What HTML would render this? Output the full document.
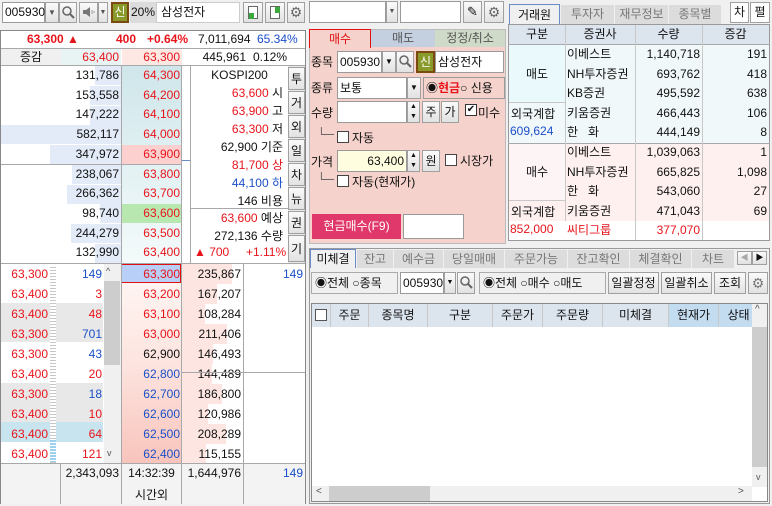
<!DOCTYPE html>
<html><head><meta charset="utf-8">
<style>
*{box-sizing:border-box;margin:0;padding:0}
body{width:772px;height:506px;overflow:hidden;background:#f0f0f0;font-family:"Liberation Sans","Noto Sans CJK KR",sans-serif;font-size:12px;color:#111;position:relative}
div{position:absolute;white-space:nowrap}
span{white-space:nowrap}
span[style*="left"]{position:absolute}
.r{color:#e8141b}.b{color:#1a4fc8}
.ra{text-align:right}.ca{text-align:center}
.bx{border:1px solid #9a9a9a;background:#fff}
.btn{border:1px solid #a0a0a0;background:linear-gradient(#fafafa,#e2e2e2);text-align:center}
.ln{background:#a8a8a8}
</style></head><body>

<!-- LEFT TOOLBAR -->
<div class="bx" style="left:2px;top:2px;width:43px;height:21px;line-height:19px;padding-left:2px">005930</div>
<div class="btn" style="left:45px;top:2px;width:14px;height:21px;line-height:19px;font-size:8px;color:#555">▼</div>
<div class="btn" style="left:59px;top:2px;width:18px;height:21px"><svg width="16" height="18"><circle cx="7" cy="8" r="4" fill="none" stroke="#666" stroke-width="1.5"/><path d="M10 11l4 4" stroke="#666" stroke-width="2"/></svg></div>
<div class="btn" style="left:79px;top:2px;width:19px;height:21px"><svg width="18" height="18"><path d="M3 7h3l4-3v10l-4-3H3z" fill="#777"/><path d="M12 7v4M14 8v2" stroke="#999"/></svg></div>
<div class="btn" style="left:98px;top:2px;width:10px;height:21px;font-size:7px;line-height:19px;color:#555">▼</div>
<div style="left:111px;top:2px;width:18px;height:21px;background:#8a9a2a;border:2px solid #7a4a10;color:#fff;text-align:center;line-height:17px">신</div>
<div style="left:130px;top:2px;width:26px;height:21px;background:#dcdcdc;line-height:21px;text-align:center">20%</div>
<div class="bx" style="left:156px;top:2px;width:84px;height:21px;line-height:19px;padding-left:4px;border-color:#ccc">삼성전자</div>
<div class="btn" style="left:243px;top:2px;width:20px;height:21px"><div style="left:4px;top:3px;width:10px;height:13px;border:1px solid #666;background:#fff"></div><div style="left:5px;top:10px;width:5px;height:6px;background:#3aa83a"></div></div>
<div class="btn" style="left:265px;top:2px;width:20px;height:21px"><div style="left:4px;top:3px;width:10px;height:13px;border:1px solid #666;background:#fff"></div><div style="left:9px;top:4px;width:5px;height:6px;background:#3aa83a"></div></div>
<div class="btn" style="left:287px;top:2px;width:18px;height:21px;font-size:14px;line-height:19px;color:#666">⚙</div>

<!-- LEFT PANEL -->
<div style="left:0;top:30px;width:306px;height:474px;background:#fff;border:1px solid #888"></div>
<div style="left:1px;top:31px;width:304px;height:17px;line-height:17px;font-weight:bold">
 <span class="r" style="left:26px">63,300 ▲</span>
 <span class="r" style="left:115px">400</span>
 <span class="r" style="left:146px">+0.64%</span>
 <span style="left:197px;font-weight:normal">7,011,694</span>
 <span class="b" style="left:256px;font-weight:normal">65.34%</span>
</div>
<div class="ln" style="left:1px;top:48px;width:304px;height:1px"></div>
<div style="left:1px;top:49px;width:60px;height:16px;background:#f0f0f0;line-height:16px;text-align:center">증감</div>
<div class="r ra" style="left:61px;top:49px;width:60px;height:16px;background:#e8f4f4;line-height:16px;padding-right:2px">63,400</div>
<div class="r ra" style="left:122px;top:49px;width:60px;height:16px;background:#fde8e4;line-height:16px;padding-right:2px">63,300</div>
<div class="ra" style="left:182px;top:49px;width:66px;height:16px;line-height:16px;padding-right:2px">445,961</div>
<div style="left:253px;top:49px;width:50px;height:16px;line-height:16px">0.12%</div>
<div class="ln" style="left:1px;top:65px;width:304px;height:1px"></div>

<!-- upper sell rows -->
<div style="left:121px;top:66px;width:61px;height:197px;background:linear-gradient(#cfe6ea,#e4f2f4 55%,#f4fafa)"></div>
<div style="left:1px;top:125px;width:120px;height:19px;background:#e3ebf8"></div>
<div style="left:50px;top:145px;width:71px;height:19px;background:#e3ebf8"></div>
<div style="left:95px;top:66px;width:26px;height:19px;background:#e3ebf8"></div>
<div style="left:90px;top:86px;width:31px;height:19px;background:#e3ebf8"></div>
<div style="left:90px;top:106px;width:31px;height:19px;background:#e3ebf8"></div>
<div style="left:72px;top:165px;width:49px;height:19px;background:#e3ebf8"></div>
<div style="left:67px;top:185px;width:54px;height:19px;background:#e3ebf8"></div>
<div style="left:100px;top:204px;width:21px;height:19px;background:#e3ebf8"></div>
<div style="left:71px;top:224px;width:50px;height:19px;background:#e3ebf8"></div>
<div style="left:95px;top:244px;width:26px;height:19px;background:#e3ebf8"></div>
<div style="left:121px;top:145px;width:61px;height:19px;background:#fdd0d0"></div>
<div style="left:121px;top:204px;width:61px;height:19px;background:#b8e8b0"></div>
<div class="ln" style="left:1px;top:164px;width:181px;height:1px"></div>
<div class="ln" style="left:121px;top:66px;width:1px;height:197px"></div>
<div class="ln" style="left:181px;top:66px;width:1px;height:197px"></div>
<div class="ln" style="left:190px;top:66px;width:1px;height:197px"></div>
<div class="ln" style="left:182px;top:160px;width:8px;height:1px;background:#6a8ac8"></div>

<div style="left:61px;top:66px;width:58px;line-height:19.7px;text-align:right">131,786<br>153,558<br>147,222<br>582,117<br>347,972<br>238,067<br>266,362<br>98,740<br>244,279<br>132,990</div>
<div class="r" style="left:121px;top:66px;width:59px;line-height:19.7px;text-align:right">64,300<br>64,200<br>64,100<br>64,000<br>63,900<br>63,800<br>63,700<br>63,600<br>63,500<br>63,400</div>

<div style="left:191px;top:66px;width:97px;line-height:18px;text-align:center">KOSPI200</div>
<div style="left:191px;top:84px;width:94px;line-height:18px;text-align:right;padding-right:2px"><span class="r">63,600</span> 시<br><span class="r">63,900</span> 고<br><span class="r">63,300</span> 저<br>62,900 기준<br><span class="r">81,700 상</span><br><span class="b">44,100 하</span><br>146 비용</div>
<div class="ln" style="left:191px;top:208px;width:97px;height:1px"></div>
<div style="left:191px;top:209px;width:94px;line-height:18px;text-align:right;padding-right:2px"><span class="r">63,600</span> 예상<br>272,136 수량</div>
<div class="r" style="left:194px;top:245px">▲ 700</div>
<div class="r" style="left:246px;top:245px">+1.11%</div>
<!-- side buttons -->
<div style="left:288px;top:66px;width:17px;height:197px;background:#e8e8e8">
 <div class="btn" style="left:0;top:1px;width:17px;height:23px;line-height:23px">투</div>
 <div class="btn" style="left:0;top:25px;width:17px;height:23px;line-height:23px">거</div>
 <div class="btn" style="left:0;top:49px;width:17px;height:23px;line-height:23px">외</div>
 <div class="btn" style="left:0;top:73px;width:17px;height:23px;line-height:23px">일</div>
 <div class="btn" style="left:0;top:97px;width:17px;height:23px;line-height:23px">차</div>
 <div class="btn" style="left:0;top:121px;width:17px;height:23px;line-height:23px">뉴</div>
 <div class="btn" style="left:0;top:145px;width:17px;height:23px;line-height:23px">권</div>
 <div class="btn" style="left:0;top:169px;width:17px;height:27px;line-height:27px">기</div>
</div>
<div class="ln" style="left:1px;top:263px;width:304px;height:1px"></div>

<!-- lower section -->
<div style="left:1px;top:303px;width:102px;height:39px;background:#e8e8e8"></div>
<div style="left:1px;top:383px;width:102px;height:39px;background:#e8e8e8"></div>
<div style="left:1px;top:422px;width:102px;height:20px;background:#c8e4ee"></div>
<div style="left:50px;top:265px;width:6px;height:198px;background:repeating-linear-gradient(#fff 0 2px,#c8c8c8 2px 3px)"></div>
<div style="left:50px;top:440px;width:6px;height:22px;background:repeating-linear-gradient(#9cd0ec 0 2px,#fff 2px 3px)"></div>
<div style="left:104px;top:264px;width:17px;height:199px;background:#f0f0f0"></div>
<div style="left:104px;top:281px;width:16px;height:84px;background:#cdcdcd"></div>
<div style="left:106px;top:266px;font-size:9px;color:#555">^</div>
<div style="left:107px;top:448px;font-size:9px;color:#555">v</div>
<div class="r" style="left:0;top:264px;width:48px;line-height:20px;text-align:right">63,300<br>63,400<br>63,400<br>63,300<br>63,300<br>63,400<br>63,300<br>63,400<br>63,400<br>63,400</div>
<div style="left:56px;top:264px;width:46px;line-height:20px;text-align:right"><span class="b">149</span><br><span class="r">3</span><br><span class="r">48</span><br><span class="b">701</span><br><span class="b">43</span><br><span class="r">20</span><br><span class="b">18</span><br><span class="r">10</span><br><span class="r">64</span><br><span class="r">121</span></div>

<div style="left:121px;top:264px;width:61px;height:199px;background:linear-gradient(#fff8f6,#fde4df 50%,#f8c4bc)"></div>
<div style="left:121px;top:264px;width:60px;height:19px;background:#b8d0f8;border:1px solid #e01010"></div>
<div style="left:182px;top:264px;width:60px;height:199px">
 <div style="left:0;top:0;width:50px;height:20px;background:#fde6e2"></div>
 <div style="left:0;top:20px;width:35px;height:20px;background:#fde6e2"></div>
 <div style="left:0;top:40px;width:23px;height:20px;background:#fde6e2"></div>
 <div style="left:0;top:60px;width:45px;height:20px;background:#fde6e2"></div>
 <div style="left:0;top:80px;width:31px;height:20px;background:#fde6e2"></div>
 <div style="left:0;top:100px;width:30px;height:20px;background:#fde6e2"></div>
 <div style="left:0;top:120px;width:40px;height:20px;background:#fde6e2"></div>
 <div style="left:0;top:140px;width:26px;height:20px;background:#fde6e2"></div>
 <div style="left:0;top:160px;width:44px;height:20px;background:#fde6e2"></div>
 <div style="left:0;top:180px;width:24px;height:19px;background:#fde6e2"></div>
</div>
<div style="left:121px;top:264px;width:59px;line-height:20px;text-align:right"><span class="r">63,300<br>63,200<br>63,100<br>63,000</span><br>62,900<br><span class="b">62,800<br>62,700<br>62,600<br>62,500<br>62,400</span></div>
<div style="left:182px;top:264px;width:59px;line-height:20px;text-align:right">235,867<br>167,207<br>108,284<br>211,406<br>146,493<br>144,489<br>186,800<br>120,986<br>208,289<br>115,155</div>
<div class="b" style="left:243px;top:264px;width:60px;line-height:20px;text-align:right">149</div>
<div class="ln" style="left:121px;top:264px;width:1px;height:240px"></div>
<div class="ln" style="left:181px;top:264px;width:1px;height:240px"></div>
<div class="ln" style="left:243px;top:264px;width:1px;height:240px"></div>
<div class="ln" style="left:181px;top:372px;width:124px;height:1px"></div>
<div class="ln" style="left:1px;top:463px;width:304px;height:1px"></div>
<div style="left:1px;top:464px;width:304px;height:40px;background:#f3f3f3"></div>
<div class="ln" style="left:60px;top:464px;width:1px;height:40px"></div>
<div class="ln" style="left:121px;top:464px;width:1px;height:40px"></div>
<div class="ln" style="left:181px;top:464px;width:1px;height:40px"></div>
<div class="ln" style="left:243px;top:464px;width:1px;height:40px"></div>
<div style="left:61px;top:466px;width:58px;text-align:right">2,343,093</div>
<div style="left:122px;top:466px;width:59px;text-align:center">14:32:39</div>
<div style="left:122px;top:486px;width:59px;text-align:center">시간외</div>
<div style="left:182px;top:466px;width:59px;text-align:right">1,644,976</div>
<div class="b" style="left:244px;top:466px;width:59px;text-align:right">149</div>

<!-- ORDER FORM -->
<div class="bx" style="left:309px;top:1px;width:77px;height:22px"></div>
<div class="btn" style="left:386px;top:1px;width:12px;height:22px;font-size:7px;line-height:20px;color:#555">▼</div>
<div class="bx" style="left:400px;top:1px;width:61px;height:22px"></div>
<div class="btn" style="left:463px;top:1px;width:19px;height:22px;font-size:13px;line-height:20px">✎</div>
<div class="btn" style="left:484px;top:1px;width:20px;height:22px;font-size:14px;line-height:20px;color:#666">⚙</div>
<div style="left:309px;top:29px;width:197px;height:215px;background:#f5d2cc;border:1px solid #bbb"></div>
<div style="left:309px;top:29px;width:62px;height:19px;background:#f5d2cc;border:1px solid #e01010;border-bottom:none;color:#e01010;text-align:center;line-height:18px">매수</div>
<div style="left:371px;top:30px;width:64px;height:17px;background:#c4d0e0;text-align:center;line-height:17px;color:#555">매도</div>
<div style="left:435px;top:30px;width:70px;height:17px;background:#d0dac8;text-align:center;line-height:17px;color:#555">정정/취소</div>
<div style="left:311px;top:53px">종목</div>
<div class="bx" style="left:337px;top:51px;width:45px;height:22px;line-height:20px;padding-left:2px">005930</div>
<div class="btn" style="left:382px;top:51px;width:14px;height:22px;font-size:8px;line-height:20px">▼</div>
<div class="btn" style="left:396px;top:51px;width:18px;height:22px"><svg width="16" height="18"><circle cx="7" cy="8" r="4" fill="none" stroke="#666" stroke-width="1.5"/><path d="M10 11l4 4" stroke="#666" stroke-width="2"/></svg></div>
<div style="left:416px;top:51px;width:19px;height:22px;background:#8a9a2a;border:2px solid #7a4a10;color:#fff;text-align:center;line-height:18px">신</div>
<div class="bx" style="left:435px;top:51px;width:69px;height:22px;line-height:20px;padding-left:2px">삼성전자</div>
<div style="left:311px;top:79px">종류</div>
<div class="bx" style="left:337px;top:77px;width:70px;height:22px;line-height:20px;padding-left:2px">보통</div>
<div class="btn" style="left:407px;top:77px;width:14px;height:22px;font-size:8px;line-height:20px">▼</div>
<div style="left:423px;top:77px;width:82px;height:22px;border:1px solid #999;line-height:20px;padding-left:2px">◉<b class="r">현금</b>○ 신용</div>
<div style="left:311px;top:104px">수량</div>
<div class="bx" style="left:337px;top:101px;width:70px;height:22px"></div>
<div class="btn" style="left:407px;top:101px;width:13px;height:22px;font-size:7px;line-height:10px">▲<br>▼</div>
<div class="btn" style="left:422px;top:101px;width:18px;height:22px;line-height:20px">주</div>
<div class="btn" style="left:441px;top:101px;width:18px;height:22px;line-height:20px">가</div>
<div style="left:465px;top:104px;width:12px;height:12px;border:1px solid #333;background:#fff;font-size:10px;line-height:10px;text-align:center">✔</div>
<div style="left:478px;top:104px">미수</div>
<div style="left:317px;top:127px;color:#555">└─</div>
<div style="left:337px;top:131px;width:12px;height:12px;border:1px solid #444;background:#fff"></div>
<div style="left:352px;top:129px">자동</div>
<div style="left:311px;top:153px">가격</div>
<div style="left:337px;top:150px;width:70px;height:22px;background:#fffde0;border:1px solid #999;line-height:20px;text-align:right;padding-right:2px">63,400</div>
<div class="btn" style="left:407px;top:150px;width:13px;height:22px;font-size:7px;line-height:10px">▲<br>▼</div>
<div class="btn" style="left:422px;top:150px;width:18px;height:22px;line-height:20px">원</div>
<div style="left:445px;top:154px;width:12px;height:12px;border:1px solid #444;background:#fff"></div>
<div style="left:460px;top:152px">시장가</div>
<div style="left:317px;top:172px;color:#555">└─</div>
<div style="left:337px;top:175px;width:12px;height:12px;border:1px solid #444;background:#fff"></div>
<div style="left:352px;top:173px">자동(현재가)</div>
<div style="left:312px;top:214px;width:89px;height:25px;background:#e0386a;color:#fff;text-align:center;line-height:25px">현금매수(F9)</div>
<div class="bx" style="left:403px;top:214px;width:61px;height:25px"></div>

<!-- BROKER PANEL -->
<div style="left:509px;top:4px;width:51px;height:20px;background:#f0f0f0;border:1px solid #6a8ac8;border-bottom:none;text-align:center;line-height:20px">거래원</div>
<div style="left:561px;top:5px;width:53px;height:19px;background:#dcdcdc;text-align:center;line-height:19px;color:#777">투자자</div>
<div style="left:615px;top:5px;width:53px;height:19px;background:#dcdcdc;text-align:center;line-height:19px;color:#777">재무정보</div>
<div style="left:669px;top:5px;width:52px;height:19px;background:#dcdcdc;text-align:center;line-height:19px;color:#777">종목별</div>
<div class="btn" style="left:730px;top:2px;width:19px;height:21px;line-height:19px;background:#fff">차</div>
<div class="btn" style="left:750px;top:2px;width:20px;height:21px;line-height:19px;background:#fff">펼</div>
<div style="left:508px;top:24px;width:262px;height:217px;background:#fff;border:1px solid #999"></div>
<div style="left:509px;top:25px;width:260px;height:19px;background:#dce4ee;line-height:19px">
 <span style="left:0;width:56px;text-align:center">구분</span><span style="left:56px;width:70px;text-align:center">증권사</span><span style="left:126px;width:67px;text-align:center">수량</span><span style="left:193px;width:67px;text-align:center">증감</span></div>
<div style="left:509px;top:45px;width:260px;height:98px;background:#f0f8fa"></div>
<div style="left:509px;top:143px;width:260px;height:78px;background:#fdf0ee"></div>
<div style="left:509px;top:221px;width:194px;height:19px;background:#fff"></div>
<div style="left:509px;top:45px;width:56px;height:57px;background:#eafafc"></div>
<div style="left:509px;top:143px;width:56px;height:57px;background:#fdf4f6"></div>
<div class="ln" style="left:508px;top:44px;width:262px;height:1px"></div>
<div class="ln" style="left:508px;top:143px;width:262px;height:1px"></div>
<div class="ln" style="left:565px;top:25px;width:1px;height:196px;background:#c8c8c8"></div>
<div class="ln" style="left:635px;top:25px;width:1px;height:215px;background:#c8c8c8"></div>
<div class="ln" style="left:702px;top:25px;width:1px;height:215px;background:#c8c8c8"></div>
<div class="ln" style="left:509px;top:102px;width:56px;height:1px;background:#c8c8c8"></div>
<div class="ln" style="left:509px;top:200px;width:56px;height:1px;background:#c8c8c8"></div>
<div style="left:509px;top:65px;width:56px;text-align:center">매도</div>
<div style="left:509px;top:163px;width:56px;text-align:center">매수</div>
<div style="left:511px;top:105px">외국계합</div>
<div class="b" style="left:510px;top:124px">609,624</div>
<div style="left:511px;top:203px">외국계합</div>
<div class="r" style="left:510px;top:222px">852,000</div>
<div style="left:567px;top:45px;line-height:19.6px">이베스트<br>NH투자증권<br>KB증권<br>키움증권<br>한&nbsp;&nbsp;&nbsp;화<br>이베스트<br>NH투자증권<br>한&nbsp;&nbsp;&nbsp;화<br>키움증권<br><span class="r">씨티그룹</span></div>
<div style="left:636px;top:45px;width:64px;line-height:19.6px;text-align:right">1,140,718<br>693,762<br>495,592<br>466,443<br>444,149<br>1,039,063<br>665,825<br>543,060<br>471,043<br><span class="r">377,070</span></div>
<div style="left:703px;top:45px;width:64px;line-height:19.6px;text-align:right">191<br>418<br>638<br>106<br>8<br>1<br>1,098<br>27<br>69</div>

<!-- BOTTOM TABS -->
<div style="left:309px;top:248px;width:461px;height:256px;border:1px solid #999;background:#f0f0f0"></div>
<div style="left:310px;top:249px;width:46px;height:19px;background:#f0f0f0;border:1px solid #6a8ac8;border-bottom:none;text-align:center;line-height:18px">미체결</div>
<div style="left:357px;top:250px;width:36px;height:18px;background:#dcdcdc;color:#777;text-align:center;line-height:18px">잔고</div>
<div style="left:394px;top:250px;width:49px;height:18px;background:#dcdcdc;color:#777;text-align:center;line-height:18px">예수금</div>
<div style="left:444px;top:250px;width:60px;height:18px;background:#dcdcdc;color:#777;text-align:center;line-height:18px">당일매매</div>
<div style="left:505px;top:250px;width:62px;height:18px;background:#dcdcdc;color:#777;text-align:center;line-height:18px">주문가능</div>
<div style="left:568px;top:250px;width:61px;height:18px;background:#dcdcdc;color:#777;text-align:center;line-height:18px">잔고확인</div>
<div style="left:630px;top:250px;width:61px;height:18px;background:#dcdcdc;color:#777;text-align:center;line-height:18px">체결확인</div>
<div style="left:692px;top:250px;width:42px;height:18px;background:#dcdcdc;color:#777;text-align:center;line-height:18px">차트</div>
<div class="btn" style="left:737px;top:251px;width:15px;height:14px;font-size:8px;line-height:12px;color:#aaa">◀</div>
<div class="btn" style="left:752px;top:251px;width:15px;height:14px;font-size:8px;line-height:12px">▶</div>
<div style="left:311px;top:272px;width:87px;height:22px;border:1px solid #aaa;line-height:20px;padding-left:3px">◉전체 ○종목</div>
<div class="bx" style="left:400px;top:272px;width:44px;height:22px;line-height:20px;padding-left:2px">005930</div>
<div class="btn" style="left:444px;top:272px;width:12px;height:22px;font-size:7px;line-height:20px">▼</div>
<div class="btn" style="left:457px;top:272px;width:18px;height:22px"><svg width="16" height="18"><circle cx="7" cy="8" r="4" fill="none" stroke="#666" stroke-width="1.5"/><path d="M10 11l4 4" stroke="#666" stroke-width="2"/></svg></div>
<div style="left:479px;top:272px;width:127px;height:22px;border:1px solid #aaa;line-height:20px;padding-left:3px">◉전체 ○매수 ○매도</div>
<div class="btn" style="left:608px;top:272px;width:51px;height:22px;line-height:20px">일괄정정</div>
<div class="btn" style="left:661px;top:272px;width:51px;height:22px;line-height:20px">일괄취소</div>
<div class="btn" style="left:714px;top:272px;width:32px;height:22px;line-height:20px">조회</div>
<div class="btn" style="left:748px;top:272px;width:20px;height:22px;font-size:14px;line-height:20px;color:#777">⚙</div>
<div style="left:311px;top:303px;width:457px;height:199px;background:#fff;border:1px solid #888"></div>
<div style="left:312px;top:304px;width:440px;height:23px;background:#dce4ee;line-height:23px">
 <div style="left:3px;top:5px;width:12px;height:12px;border:1px solid #555;background:#fff"></div>
 <span style="left:18px;width:38px;text-align:center;border-left:1px solid #c8c8c8">주문</span>
 <span style="left:56px;width:59px;text-align:center;border-left:1px solid #c8c8c8">종목명</span>
 <span style="left:115px;width:65px;text-align:center;border-left:1px solid #c8c8c8">구분</span>
 <span style="left:180px;width:50px;text-align:center;border-left:1px solid #c8c8c8">주문가</span>
 <span style="left:230px;width:60px;text-align:center;border-left:1px solid #c8c8c8">주문량</span>
 <span style="left:290px;width:66px;text-align:center;border-left:1px solid #c8c8c8">미체결</span>
 <span style="left:356px;width:50px;text-align:center;background:#c4dcf0;border-left:1px solid #c8c8c8">현재가</span>
 <span style="left:406px;width:40px;text-align:center;background:#c4dcf0;border-left:1px solid #c8c8c8">상태</span>
</div>
<div style="left:752px;top:304px;width:15px;height:183px;background:#f0f0f0"><div style="left:0;top:23px;width:15px;height:140px;background:#cdcdcd"></div><span style="left:3px;top:0;font-size:10px;color:#555">^</span><span style="left:4px;top:168px;font-size:9px;color:#555">v</span></div>
<div style="left:312px;top:486px;width:440px;height:15px;background:#f0f0f0"><div style="left:17px;top:0;width:101px;height:15px;background:#cdcdcd"></div><span style="left:4px;top:0;font-size:10px;color:#555">&lt;</span><span style="left:426px;top:0;font-size:10px;color:#555">&gt;</span></div>
</body></html>
